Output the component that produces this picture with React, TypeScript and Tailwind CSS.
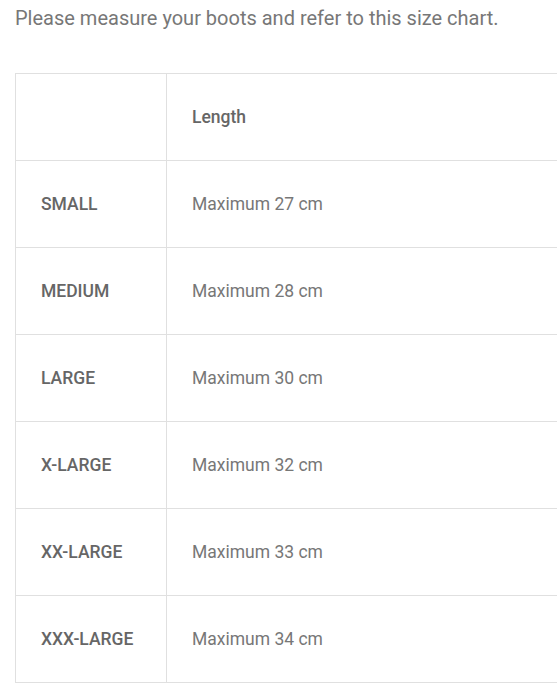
const rows = [
  ["SMALL", "Maximum 27 cm"],
  ["MEDIUM", "Maximum 28 cm"],
  ["LARGE", "Maximum 30 cm"],
  ["X-LARGE", "Maximum 32 cm"],
  ["XX-LARGE", "Maximum 33 cm"],
  ["XXX-LARGE", "Maximum 34 cm"],
]

export default function App() {
  return (
    <div className="w-[557px] h-[687px] overflow-hidden bg-white font-['Roboto',sans-serif]">
      <p className="pl-[15px] pt-[5px] text-[20px] leading-[26px] text-[#777]">
        Please measure your boots and refer to this size chart.
      </p>

      <div className="ml-[15px] mt-[42px] w-[640px]">
        <table className="w-full border-collapse border border-[#e0e0e0]">
          <tbody>
            <tr className="h-[87px]">
              <td className="w-[151px] border border-[#e0e0e0] px-[25px]"></td>
              <td className="border border-[#e0e0e0] px-[25px] text-[17.5px] font-medium text-[#666]">Length</td>
            </tr>
            {rows.map(([size, length]) => (
              <tr key={size} className="h-[87px]">
                <td className="border border-[#e0e0e0] px-[25px] text-[17.5px] font-medium text-[#666]">{size}</td>
                <td className="border border-[#e0e0e0] px-[25px] text-[17.5px] text-[#777]">{length}</td>
              </tr>
            ))}
          </tbody>
        </table>
      </div>
    </div>
  )
}
